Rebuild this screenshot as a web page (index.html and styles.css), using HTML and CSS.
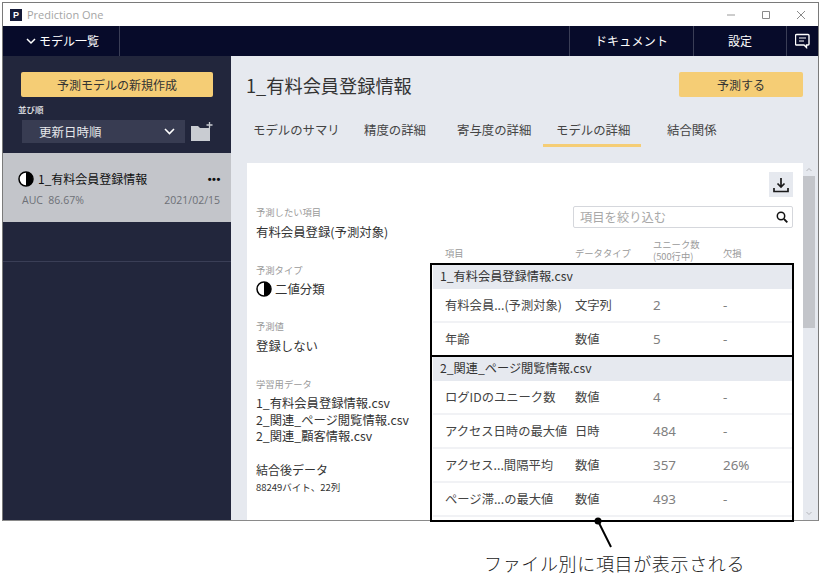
FILE: index.html
```html
<!DOCTYPE html>
<html lang="ja">
<head>
  <meta charset="UTF-8">
  <title>Prediction One</title>
  <link rel="stylesheet" href="styles.css">
</head>
<body>

  <div class="window">
    <div class="titlebar">
      <span class="app-icon">P</span>
      <span class="app-name">Prediction One</span>
      <div class="win-controls">
        <svg width="10" height="10" viewBox="0 0 10 10"><path d="M1 5h8" stroke="#9a9a9a" fill="none"/></svg>
        <svg width="10" height="10" viewBox="0 0 10 10"><path d="M1.5 1.5h7v7h-7z" stroke="#8a8a8a" fill="none"/></svg>
        <svg width="10" height="10" viewBox="0 0 10 10"><path d="M1 1l8 8M9 1l-8 8" stroke="#8a8a8a" fill="none"/></svg>
      </div>
    </div>

    <div class="navbar">
      <div class="nav-models">
        <svg width="10" height="7" viewBox="0 0 10 7"><path d="M1 1l4 4 4-4" stroke="#fff" stroke-width="1.5" fill="none"/></svg>
        モデル一覧
      </div>
      <div class="nav-doc">ドキュメント</div>
      <div class="nav-set">設定</div>
      <div class="nav-msg">
        <svg width="15" height="16" viewBox="0 0 15 16"><path d="M2 1.5h11a1 1 0 0 1 1 1v8.500a1 1 0 0 1-1 1h-1.500v2.500l-2.500-2.500h-7.500a1 1 0 0 1-1-1v-8.500a1 1 0 0 1 1-1z" stroke="#fff" stroke-width="1.400" fill="none"/><path d="M4 5h7M4 8h5" stroke="#fff" stroke-width="1.200"/></svg>
      </div>
    </div>

    <div class="content">
      <aside class="sidebar">
        <button class="btn-new">予測モデルの新規作成</button>
        <div class="sort-label">並び順</div>
        <div class="sort-row">
          <div class="sort-select">
            <span>更新日時順</span>
            <svg width="11" height="7" viewBox="0 0 11 7"><path d="M1 1l4.500 4.500 4.500-4.500" stroke="#fff" stroke-width="1.600" fill="none"/></svg>
          </div>
          <svg class="folder" width="22" height="20" viewBox="0 0 22 20"><path d="M0 4h7l2 2h10v13h-19z" fill="#c9ccd2"/><path d="M18.500 0v6M15.500 3h6" stroke="#c9ccd2" stroke-width="1.300"/></svg>
        </div>
        <div class="model-item">
          <div class="model-top">
            <svg class="half" width="16" height="16" viewBox="0 0 16 16"><circle cx="8" cy="8" r="7" fill="#fff" stroke="#000" stroke-width="1.500"/><path d="M8 1a7 7 0 0 1 0 14z" fill="#000"/></svg>
            <span class="model-name">1_有料会員登録情報</span>
            <span class="dots">•••</span>
          </div>
          <div class="model-meta"><span>AUC&nbsp; 86.67%</span><span>2021/02/15</span></div>
        </div>
        <div class="model-empty"></div>
      </aside>

      <main class="main">
        <div class="head">
          <h1>1_有料会員登録情報</h1>
          <button class="btn-predict">予測する</button>
        </div>
        <nav class="tabs">
          <span class="tab tab-1">モデルのサマリ</span>
          <span class="tab tab-2">精度の詳細</span>
          <span class="tab tab-3">寄与度の詳細</span>
          <span class="tab tab-4 active">モデルの詳細</span>
          <span class="tab tab-5">結合関係</span>
        </nav>

        <div class="panel-wrap">
          <section class="panel">
            <div class="info">
              <div class="info-label first">予測したい項目</div>
              <div class="info-value">有料会員登録(予測対象)</div>
              <div class="info-label">予測タイプ</div>
              <div class="info-value type">
                <svg width="16" height="16" viewBox="0 0 16 16"><circle cx="8" cy="8" r="7" fill="#fff" stroke="#000" stroke-width="1.500"/><path d="M8 1a7 7 0 0 1 0 14z" fill="#000"/></svg>
                二値分類
              </div>
              <div class="info-label">予測値</div>
              <div class="info-value">登録しない</div>
              <div class="info-label">学習用データ</div>
              <div class="info-files">
                <div>1_有料会員登録情報.csv</div>
                <div>2_関連_ページ閲覧情報.csv</div>
                <div>2_関連_顧客情報.csv</div>
              </div>
              <div class="info-merged">結合後データ</div>
              <div class="info-size">88249バイト、22列</div>
            </div>

            <div class="detail">
              <div class="tools">
                <div class="download">
                  <svg width="16" height="16" viewBox="0 0 16 16"><path d="M8 1v9M4.500 6.500l3.500 3.500 3.500-3.500M1 11v3.500h14v-3.500" stroke="#1a1a1a" stroke-width="1.700" fill="none"/></svg>
                </div>
              </div>
              <div class="search">
                <span>項目を絞り込む</span>
                <svg width="12" height="12" viewBox="0 0 12 12"><circle cx="5" cy="5" r="3.700" stroke="#111" stroke-width="1.500" fill="none"/><path d="M8 8l3.300 3.300" stroke="#111" stroke-width="1.800"/></svg>
              </div>
              <div class="cols">
                <span class="c-name">項目</span>
                <span class="c-type">データタイプ</span>
                <span class="c-uniq">ユニーク数<br>(500行中)</span>
                <span class="c-miss">欠損</span>
              </div>
              <div class="group">1_有料会員登録情報.csv</div>
              <div class="row"><span class="c-name">有料会員...(予測対象)</span><span class="c-type">文字列</span><span class="c-uniq">2</span><span class="c-miss">-</span></div>
              <div class="row"><span class="c-name">年齢</span><span class="c-type">数値</span><span class="c-uniq">5</span><span class="c-miss">-</span></div>
              <div class="group">2_関連_ページ閲覧情報.csv</div>
              <div class="row"><span class="c-name">ログIDのユニーク数</span><span class="c-type">数値</span><span class="c-uniq">4</span><span class="c-miss">-</span></div>
              <div class="row"><span class="c-name">アクセス日時の最大値</span><span class="c-type">日時</span><span class="c-uniq">484</span><span class="c-miss">-</span></div>
              <div class="row"><span class="c-name">アクセス...間隔平均</span><span class="c-type">数値</span><span class="c-uniq">357</span><span class="c-miss">26%</span></div>
              <div class="row"><span class="c-name">ページ滞...の最大値</span><span class="c-type">数値</span><span class="c-uniq">493</span><span class="c-miss">-</span></div>
            </div>
          </section>

          <div class="scrollbar">
            <svg width="12" height="13" viewBox="0 0 12 13"><path d="M3.500 8l2.500-2.500 2.500 2.500" stroke="#b5b7bc" fill="none"/></svg>
            <div class="thumb"></div>
            <svg class="down" width="12" height="13" viewBox="0 0 12 13"><path d="M3.500 5l2.500 2.500 2.500-2.500" stroke="#b5b7bc" fill="none"/></svg>
          </div>
        </div>
      </main>
    </div>
  </div>

  <!-- callout on top of the screenshot -->
  <div class="mark mark-1"></div>
  <div class="mark mark-2"></div>
  <svg class="pointer" width="30" height="34" viewBox="0 0 30 34"><circle cx="5" cy="4" r="3.500" fill="#000"/><path d="M5 4l13 26" stroke="#000" stroke-width="2"/></svg>
  <div class="caption">ファイル別に項目が表示される</div>

</body>
</html>
```

FILE: styles.css
```css
* {
  box-sizing: border-box;
}
html, body {
  margin: 0;
  height: 574px;
  overflow: hidden;
}
body {
  font-family: "Noto Sans CJK JP", "Noto Sans", sans-serif;
  background-color: #fff;
  color: #333;
  position: relative;
}
button {
  font-family: inherit;
  border: 0;
  padding: 0;
}

.window {
  margin: 2px 0 0 2px;
  width: 817px;
  height: 519px;
  border: 1px solid #7a7a7a;
  border-bottom: 1px solid #8a8a8a;
  background-color: #e6e9ef;
  display: flex;
  flex-direction: column;
}

.titlebar {
  height: 23px;
  background-color: #fff;
  display: flex;
  align-items: center;
  padding-left: 7px;
  flex: none;
}
.app-icon {
  width: 12px;
  height: 12px;
  background-color: #141a38;
  color: #fff;
  font: 700 9px/12px "Liberation Sans", sans-serif;
  text-align: center;
}
.app-name {
  margin-left: 5px;
  font: 11px/14px "Open Sans", sans-serif;
  color: #a5a5a5;
}
.win-controls {
  margin-left: auto;
  display: flex;
  gap: 25px;
  padding-right: 12px;
}

.navbar {
  height: 30px;
  background-color: #070b2a;
  color: #fff;
  display: flex;
  flex: none;
  font-size: 12px;
  line-height: 30px;
}
.nav-models {
  width: 117px;
  padding-left: 23px;
  border-right: 1px solid #3a3e56;
  display: flex;
  align-items: center;
  gap: 3px;
}
.nav-doc {
  margin-left: 449px;
  width: 124px;
  text-align: center;
  border-left: 1px solid #3a3e56;
  letter-spacing: .2px;
}
.nav-set {
  width: 94px;
  text-align: center;
  border-left: 1px solid #3a3e56;
  border-right: 1px solid #3a3e56;
}
.nav-msg {
  flex: 1;
  display: flex;
  align-items: center;
  justify-content: center;
}

.content {
  flex: 1;
  display: flex;
  min-height: 0;
}

.sidebar {
  width: 228px;
  flex: none;
  background-color: #22263c;
  display: flex;
  flex-direction: column;
}
.btn-new {
  margin: 16px 0 0 18px;
  width: 192px;
  height: 25px;
  background-color: #f5cd75;
  border-radius: 2px;
  color: #333;
  font-size: 12px;
}
.sort-label {
  margin: 6px 0 0 15px;
  font-size: 8.500px;
  line-height: 13px;
  font-weight: 500;
  color: #e8e9ee;
}
.sort-row {
  display: flex;
  align-items: flex-end;
  margin: 4px 0 0 19px;
  gap: 6px;
}
.sort-select {
  width: 163px;
  height: 23px;
  background-color: #383c52;
  color: #e6e7ea;
  font-size: 12.500px;
  line-height: 23px;
  padding: 0 10px 0 17px;
  display: flex;
  justify-content: space-between;
  align-items: center;
}
.folder {
  margin-bottom: 1px;
}
.model-item {
  margin-top: 10px;
  height: 69px;
  background-color: #c3c5ca;
  padding: 17px 10px 0 15px;
}
.model-top {
  display: flex;
  align-items: center;
  color: #111;
  font-size: 12px;
  line-height: 18px;
}
.model-top .half {
  margin-right: 4px;
}
.dots {
  margin-left: auto;
  font: 700 11px/18px "Liberation Sans", sans-serif;
  letter-spacing: .6px;
  color: #111;
}
.model-meta {
  display: flex;
  justify-content: space-between;
  padding: 0 1px 0 4px;
  margin-top: 5px;
  font: 10.500px/14px "Open Sans", sans-serif;
  color: #6d7076;
}
.model-empty {
  height: 40px;
  border-bottom: 1px solid #3a3e56;
}

.main {
  flex: 1;
  min-width: 0;
  padding-left: 16px;
  display: flex;
  flex-direction: column;
}
.head {
  display: flex;
  justify-content: space-between;
  align-items: flex-start;
  padding: 16px 15px 0 0;
  height: 58px;
  flex: none;
}
h1 {
  margin: 0 0 0 -1px;
  font-size: 18.200px;
  line-height: 27px;
  font-weight: 400;
  color: #333;
}
.btn-predict {
  width: 124px;
  height: 25px;
  background-color: #f5cd75;
  border-radius: 2px;
  color: #333;
  font-size: 12px;
}
.tabs {
  height: 49px;
  flex: none;
  display: flex;
  font-size: 12.400px;
  line-height: 32px;
  color: #444;
}
.tab {
  height: 33px;
}
.tab-1 { margin-left: 6px; width: 111px; }
.tab-2 { width: 93px; }
.tab-3 { width: 86px; }
.tab-4 {
  width: 98px;
  padding-left: 13px;
  border-bottom: 3px solid #f5cd75;
}
.tab-5 { margin-left: 26px; }

.panel-wrap {
  flex: 1;
  display: flex;
  min-height: 0;
}
.panel {
  width: 556px;
  flex: none;
  background-color: #fff;
  display: flex;
  overflow: hidden;
}
.info {
  width: 186px;
  flex: none;
  padding-left: 9px;
}
.info-label {
  margin-top: 23px;
  font-size: 9.300px;
  line-height: 12px;
  color: #9a9a9a;
}
.info-label.first {
  margin-top: 43px;
}
.info-value {
  margin-top: 5px;
  font-size: 12.400px;
  line-height: 18px;
  color: #333;
}
.info-value.type {
  display: flex;
  align-items: center;
  gap: 3px;
  margin: 4px 0 -1px;
}
.info-files {
  margin-top: 5px;
  font-size: 12.300px;
  line-height: 16.500px;
}
.info-merged {
  margin-top: 16px;
  font-size: 12px;
  line-height: 18px;
}
.info-size {
  margin-top: 1px;
  font-size: 9.500px;
  line-height: 14px;
}

.detail {
  flex: 1;
  min-width: 0;
  padding-right: 10px;
}
.tools {
  display: flex;
  justify-content: flex-end;
  padding-top: 9px;
}
.download {
  width: 24px;
  height: 25px;
  background-color: #e6e9ef;
  display: flex;
  align-items: center;
  justify-content: center;
}
.search {
  margin: 9px 0 0 140px;
  height: 22px;
  border: 1px solid #d5d7dc;
  border-radius: 2px;
  padding: 0 4px 0 6px;
  display: flex;
  justify-content: space-between;
  align-items: center;
  font-size: 12.300px;
  color: #a8a8a8;
}
.cols, .row {
  display: flex;
  padding-left: 12px;
}
.c-name { width: 130px; flex: none; }
.c-type { width: 78px; flex: none; }
.c-uniq { width: 70px; flex: none; }
.cols {
  height: 36px;
  margin-top: 1px;
  align-items: flex-end;
  font-size: 9.300px;
  line-height: 12px;
  color: #9a9a9a;
  padding-bottom: 3px;
}
.cols .c-name, .cols .c-type, .cols .c-miss {
  padding-bottom: 3px;
}
.group {
  height: 24px;
  background-color: #e6e9ef;
  padding-left: 7px;
  font-size: 12.200px;
  line-height: 23px;
  color: #333;
}
.row {
  height: 34px;
  align-items: center;
  border-bottom: 2px solid #f1f2f5;
  font-size: 12.300px;
  color: #444;
  white-space: nowrap;
}
.row .c-uniq, .row .c-miss {
  color: #808080;
  font-family: "Noto Sans", sans-serif;
  font-size: 13.400px;
}

.scrollbar {
  flex: none;
  width: 12px;
  background-color: #e6e9ef;
  display: flex;
  flex-direction: column;
}
.thumb {
  height: 152px;
  background-color: #c3c5ca;
}
.scrollbar .down {
  margin-top: auto;
}

.mark {
  position: absolute;
  left: 430px;
  width: 364px;
  border: 2px solid #000;
}
.mark-1 {
  top: 263px;
  height: 94px;
}
.mark-2 {
  top: 355px;
  height: 167px;
}
.pointer {
  position: absolute;
  left: 593px;
  top: 517px;
}
.caption {
  position: absolute;
  left: 484px;
  top: 552px;
  font-size: 18px;
  line-height: 22px;
  font-weight: 300;
  letter-spacing: .65px;
  color: #222;
  white-space: nowrap;
}
```
